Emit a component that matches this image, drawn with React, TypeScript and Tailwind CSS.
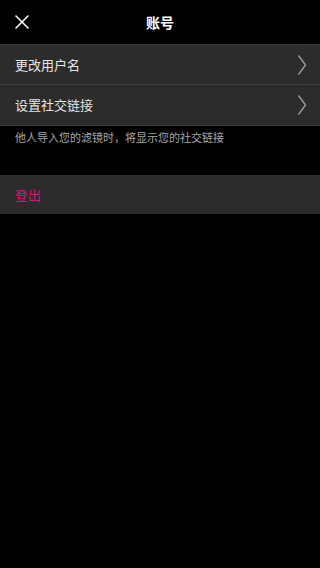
import { X } from 'lucide-react';

function Chevron() {
  return (
    <svg width="10" height="22" viewBox="0 0 10 22" className="text-[#9a9a9a]">
      <path d="M1.5 1.5 L8.5 11 L1.5 20.5" fill="none" stroke="currentColor" strokeWidth="1.4" />
    </svg>
  );
}

function Row({ label, last }: { label: string; last?: boolean }) {
  return (
    <div className={`flex h-10 items-center justify-between bg-[#2c2c2c] pl-[15px] pr-[13px] ${last ? '' : 'border-b border-[#3d3d3d]'}`}>
      <span className="text-[13px] text-[#e6e6e6]">{label}</span>
      <Chevron />
    </div>
  );
}

export default function App() {
  return (
    <div
      className="h-[568px] w-[320px] bg-black"
      style={{ fontFamily: '"Noto Sans CJK SC", "Noto Sans", sans-serif' }}
    >
      <div className="relative flex h-11 items-center justify-center">
        <X className="absolute left-[10px] top-[10px] h-6 w-6 text-white" strokeWidth={1.6} />
        <span className="text-[14px] font-bold text-white">账号</span>
      </div>

      <div className="border-y border-[#3d3d3d]">
        <Row label="更改用户名" />
        <Row label="设置社交链接" last />
      </div>

      <div className="h-[49px] pl-[15px] pt-[2px]">
        <p className="text-[11px] leading-[18px] text-[#a8a8a8]">他人导入您的滤镜时，将显示您的社交链接</p>
      </div>

      <div className="flex h-[39px] items-center bg-[#2c2c2c] pl-[15px]">
        <span className="text-[13px] text-[#d8177a]">登出</span>
      </div>
    </div>
  );
}
